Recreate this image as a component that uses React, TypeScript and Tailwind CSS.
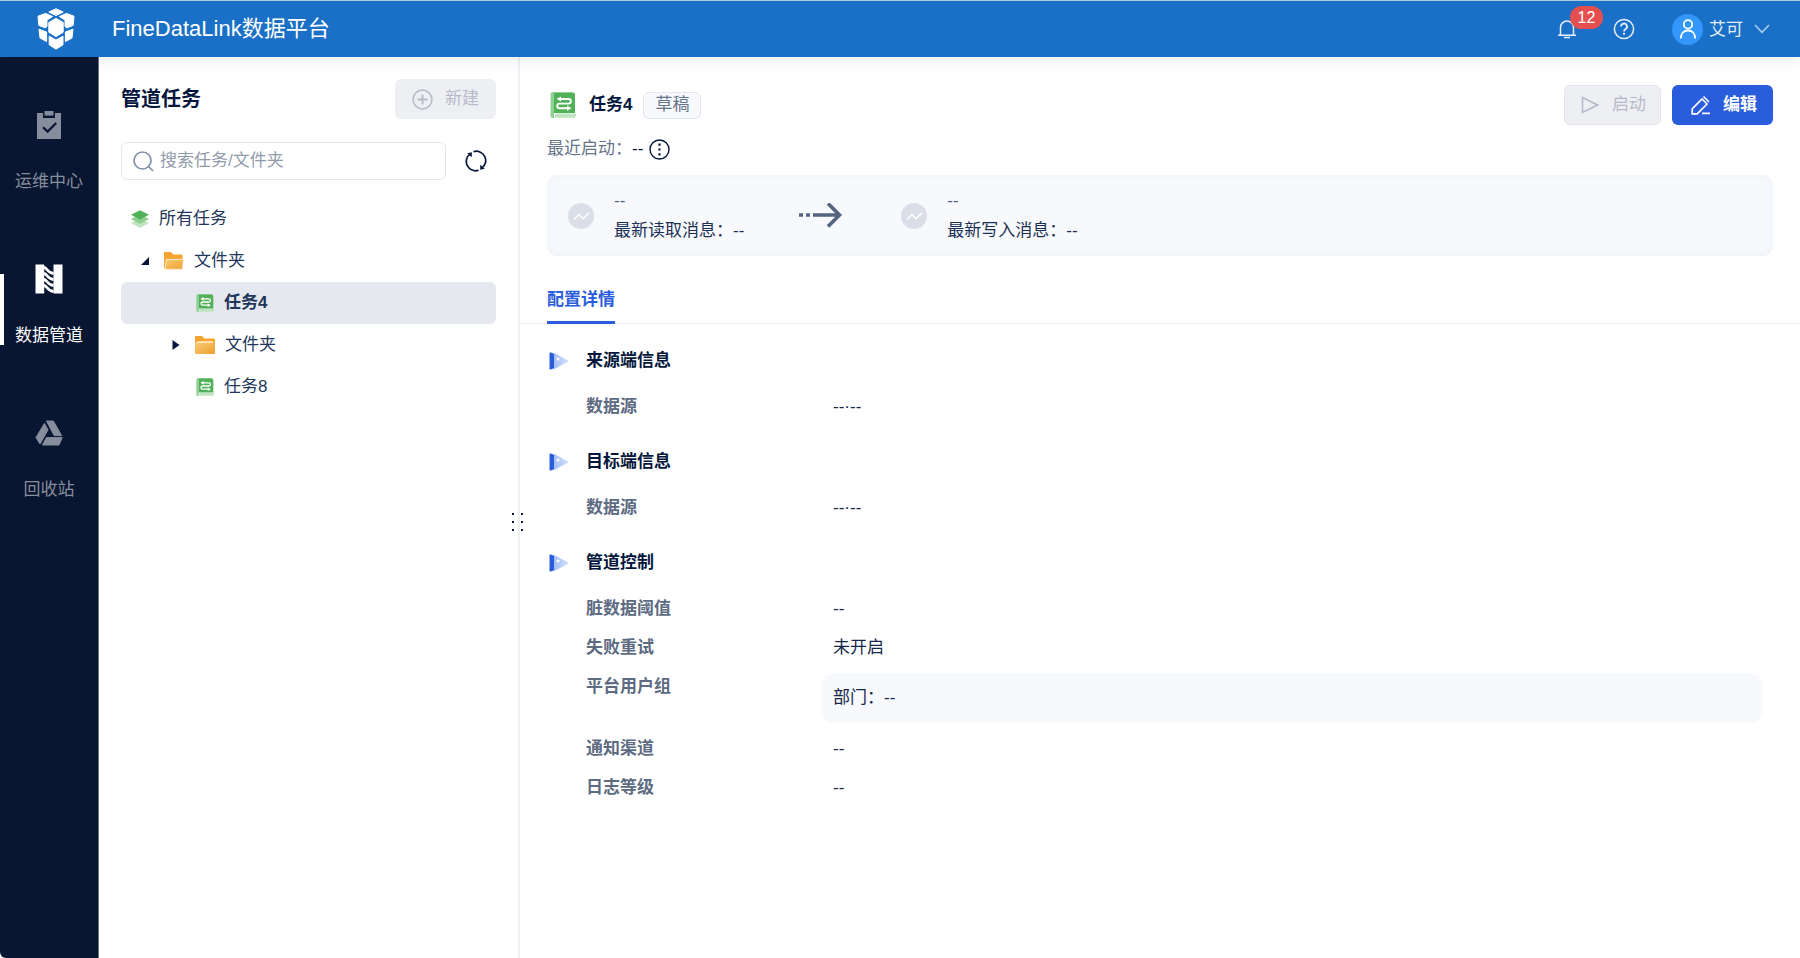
import { useState } from "react";
import type { ReactNode } from "react";
import clsx from "clsx";

interface InfoRow {
  label: string;
  value: string;
  boxed?: boolean;
}

interface InfoSection {
  title: string;
  rows: InfoRow[];
}

const sections: InfoSection[] = [
  { title: "来源端信息", rows: [{ label: "数据源", value: "--·--" }] },
  { title: "目标端信息", rows: [{ label: "数据源", value: "--·--" }] },
  {
    title: "管道控制",
    rows: [
      { label: "脏数据阈值", value: "--" },
      { label: "失败重试", value: "未开启" },
      { label: "平台用户组", value: "部门：--", boxed: true },
      { label: "通知渠道", value: "--" },
      { label: "日志等级", value: "--" },
    ],
  },
];

/* ---------- Icons ---------- */

function LogoIcon() {
  return (
    <svg width="38" height="42" viewBox="0 0 38 42" fill="#fff" stroke="#fff" strokeWidth="1" strokeLinejoin="round">
      <path d="M19 .8 26.2 4 19 7.6 11.8 4Z" />
      <path d="M1 8.2 8.6 5.4 15.6 8.6 10 12v6.600L8 19.800 1.800 17.400Z" />
      <path d="M37 8.2 29.4 5.4 22.4 8.6 28 12v6.600l2 1.200 6.200-2.400Z" />
      <path d="M19 10.4 26.2 14.4v9.8L19 28.6l-7.2-4.4v-9.8Z" />
      <path d="M2 21.2 9.6 24v9.6L3 30Z" />
      <path d="M36 21.2 28.4 24v9.6L35 30Z" />
      <path d="M12.2 28.2 19 32l7-3.8v8.6L19 41.2l-6.8-4.4Z" />
    </svg>
  );
}

function BellIcon() {
  return (
    <svg width="20" height="20" viewBox="0 0 20 20" fill="none" stroke="#e4eefa" strokeWidth="1.5">
      <path d="M3.5 16V8.5a6.5 6.5 0 0 1 13 0V16M1 16.2h18M7 18.6h6" />
    </svg>
  );
}

function HelpIcon() {
  return (
    <svg width="22" height="22" viewBox="0 0 22 22" fill="none" stroke="#e4eefa" strokeWidth="1.5">
      <circle cx="11" cy="11" r="9.6" />
      <path d="M8 8.6a3 3 0 1 1 4.4 2.6c-1 .6-1.4 1-1.4 2.2" strokeWidth="1.8" />
      <path d="M11 14.8v2" strokeWidth="1.9" />
    </svg>
  );
}

function UserIcon() {
  return (
    <svg width="18" height="20" viewBox="0 0 18 20" fill="none" stroke="#fff" strokeWidth="1.8">
      <circle cx="9" cy="5.4" r="4.2" />
      <path d="M1.8 19.5c0-5 3-8 7.2-8s7.2 3 7.2 8" />
    </svg>
  );
}

function ClipboardIcon() {
  return (
    <svg width="26" height="28" viewBox="0 0 26 28">
      <path fill="currentColor" d="M1 2h6v5h12V2h6v26H1Z" />
      <path fill="currentColor" d="M8.5 0h9v4.6h-9Z" />
      <path d="m7 16.2 4.6 4.4 8.6-8.6" fill="none" stroke="#091631" strokeWidth="2.2" />
    </svg>
  );
}

function PipelineIcon() {
  return (
    <svg width="28" height="30" viewBox="0 0 28 30">
      <path fill="currentColor" d="M.5.5h8.7v29H.5ZM18.5.5h9v29h-9Z" />
      <path
        d="M9 3.500c3.500.2 3 5.600 9.600 6M9 9.500c3.500.2 3 5.600 9.600 6M9 15.500c3.500.2 3 5.600 9.600 6M9 21.500c3.500.2 3 5.600 9.600 6"
        fill="none"
        stroke="currentColor"
        strokeWidth="2.8"
      />
    </svg>
  );
}

function RecycleIcon() {
  return (
    <svg width="28" height="26" viewBox="0 0 28 26" fill="currentColor" stroke="currentColor" strokeWidth="1" strokeLinejoin="round">
      <path d="M11.4 1h7l8.2 14.6h-7.4Z" />
      <path d="M9.4 3.4 13 9.8 5 24 1 17.6Z" />
      <path d="M11.4 17.6h15.8L24 25H7.4Z" />
    </svg>
  );
}

function LayersIcon() {
  return (
    <svg width="18" height="18" viewBox="0 0 18 18">
      <path fill="#bfe5c0" d="m0 13 9-4.4 9 4.4-9 5Z" />
      <path fill="#8fcf92" d="m0 9 9-4.4L18 9l-9 5Z" />
      <path fill="#52b058" d="m0 4.8 9-4.6 9 4.6-9 4.8Z" />
    </svg>
  );
}

function FolderIcon({ open }: { open?: boolean }) {
  return (
    <svg width="20" height="18" viewBox="0 0 20 18" className="shrink-0">
      <defs>
        <linearGradient id="folder" x1="0" y1="0" x2="1" y2="1">
          <stop offset="0" stopColor="#fccb74" />
          <stop offset="1" stopColor="#eda030" />
        </linearGradient>
      </defs>
      {open ? (
        <>
          <path fill="#f4a42f" d="M0 1.2C0 .5.5 0 1.2 0h5.6l2.6 2.6h8c.7 0 1.2.5 1.2 1.2V16H0Z" />
          <path fill="url(#folder)" stroke="#fff3dc" strokeWidth=".9" d="M2.4 7.4h17.2l-1.4 10H.8Z" />
        </>
      ) : (
        <>
          <path fill="#f4a42f" d="M0 1.2C0 .5.5 0 1.2 0h5.6l2.6 2.6h9.2c.8 0 1.4.6 1.4 1.4V17H0Z" />
          <rect y="6" width="20" height="12" rx="1" fill="url(#folder)" />
          <path fill="#fff8ea" d="M2 5.4h16v1.3H2Z" />
        </>
      )}
    </svg>
  );
}

function TaskIcon({ large }: { large?: boolean }) {
  return (
    <svg viewBox="0 0 26 26" className={clsx("shrink-0", large ? "size-[26px]" : "size-[18px]")}>
      <path fill="#8fd093" d="M3 0h19a3 3 0 0 1 3 3H4v23H2.5A2 2 0 0 1 .5 24V2.5A2.5 2.5 0 0 1 3 0Z" />
      <path fill="#52b058" d="M4 1h18.500A2.500 2.500 0 0 1 25 3.500V21H4Z" />
      <path fill="#bfe5c0" d="M5.500 21.500H26v2.300a2 2 0 0 1-2 2H4.500Z" />
      <path
        d="M9 7h9.500a2.300 2.300 0 0 1 0 4.600H9.500a2.300 2.300 0 0 0 0 4.600H19"
        fill="none"
        stroke="#fff"
        strokeWidth="1.900"
        strokeLinecap="round"
      />
      <path fill="#fff" d="M11 4.400v5.200L6.500 7ZM17 13.600v5.200l4.500-2.600Z" />
    </svg>
  );
}

function RefreshIcon() {
  return (
    <svg width="22" height="22" viewBox="0 0 22 22" fill="none" stroke="#04163c" strokeWidth="1.7">
      <path d="M8.5 1.7a9.300 9.300 0 0 1 8.300 16.400M13.500 20.300A9.300 9.300 0 0 1 5.200 3.900" />
      <path fill="#04163c" stroke="none" d="M2.200 3.200 6.800 2.200v5ZM19.800 18.800l-4.600 1v-5Z" />
    </svg>
  );
}

function StatusIcon() {
  return (
    <svg width="26" height="26" viewBox="0 0 26 26" className="shrink-0">
      <circle cx="13" cy="13" r="13" fill="#dadee6" />
      <path d="m6 16.5 5-5 4.200 4.200 5.800-6" fill="none" stroke="#fff" strokeWidth="1.5" />
    </svg>
  );
}

function SectionMarker() {
  return (
    <svg width="20" height="18" viewBox="0 0 20 18" className="shrink-0">
      <defs>
        <linearGradient id="marker" x1="0" y1="0" x2="1" y2="0">
          <stop offset="0" stopColor="#a6bff5" />
          <stop offset="1" stopColor="#d0dffc" />
        </linearGradient>
      </defs>
      <path fill="url(#marker)" d="M5 .8 19 8.400a.8.8 0 0 1 0 1.300L5 17.200Z" />
      <path fill="#2a5ddb" d="M.5 1.500C.5.500 1.200.3 2 .6l3 1.200v14.400l-3 1.200c-.8.300-1.500.1-1.500-.9Z" />
      <circle cx="9" cy="7" r="1.500" fill="#fff" />
    </svg>
  );
}

/* ---------- Layout parts ---------- */

function Header() {
  return (
    <header className="relative z-10 flex h-[57px] shrink-0 items-center border-t border-[#a9cbe0] bg-[#1a70c6] pr-[30px] pl-[37px] text-white shadow-[0_4px_16px_rgba(20,40,90,0.08)]">
      <LogoIcon />
      <h1 className="ml-[37px] pb-[2px] text-[22px]">FineDataLink数据平台</h1>

      <div className="ml-auto flex items-center">
        <button type="button" className="relative" aria-label="消息">
          <BellIcon />
          <span className="absolute -top-[13px] left-[13px] flex h-[23px] w-[33px] items-center justify-center rounded-full bg-[#e54f4f] text-base">
            12
          </span>
        </button>
        <button type="button" className="ml-[36px]" aria-label="帮助">
          <HelpIcon />
        </button>
        <button type="button" className="ml-[37px] flex items-center text-[17px] text-[#e4eefa]">
          <span className="flex size-[31px] items-center justify-center rounded-full bg-[#3296fa]">
            <UserIcon />
          </span>
          <span className="ml-[6px] pt-[2px]">艾可</span>
          <svg width="16" height="10" viewBox="0 0 16 10" fill="none" stroke="#a9cdf0" strokeWidth="1.6" className="ml-[11px]">
            <path d="m1 1 7 7.4L15 1" />
          </svg>
        </button>
      </div>
    </header>
  );
}

function NavItem({ icon, label, active }: { icon: ReactNode; label: string; active?: boolean }) {
  return (
    <a
      href="#"
      className={clsx(
        "relative flex h-[154px] flex-col items-center pt-[39px] text-[17px]",
        active ? "text-white" : "text-[#868d9c]"
      )}
    >
      {active && <span className="absolute top-[49px] left-0 h-[71px] w-1 bg-white" />}
      <span className="flex h-[30px] items-center">{icon}</span>
      <span className="mt-[30px] leading-6">{label}</span>
    </a>
  );
}

function Sidebar() {
  return (
    <nav className="w-[99px] shrink-0 rounded-bl-[6px] border-r border-[#6c7486] bg-[#091631] pt-[14px]">
      <NavItem icon={<ClipboardIcon />} label="运维中心" />
      <NavItem icon={<PipelineIcon />} label="数据管道" active />
      <NavItem icon={<RecycleIcon />} label="回收站" />
    </nav>
  );
}

function TreeRow({
  icon,
  label,
  indent,
  arrow,
  selected,
}: {
  icon: ReactNode;
  label: string;
  indent: string;
  arrow?: "open" | "closed";
  selected?: boolean;
}) {
  return (
    <li>
      <button
        type="button"
        className={clsx(
          "flex h-[42px] w-full items-center rounded-md text-[17px] text-[#22365a]",
          indent,
          selected && "bg-[#e6e8f0] font-bold"
        )}
      >
        {arrow && (
          <svg width="8" height="10" viewBox="0 0 8 10" fill="#04163c" className="mr-[15px]">
            {arrow === "open" ? <path d="M8 1v8H0Z" /> : <path d="M.5 0 7.5 5l-7 5Z" />}
          </svg>
        )}
        {icon}
        <span className="ml-[10px]">{label}</span>
      </button>
    </li>
  );
}

function TaskPanel() {
  const [keyword, setKeyword] = useState("");

  return (
    <aside className="relative w-[421px] shrink-0 border-r-2 border-[#f0f1f5] pt-[22px] pr-[22px] pl-[22px]">
      <div className="flex items-center justify-between">
        <h2 className="text-[20px] font-bold text-[#04163c]">管道任务</h2>
        <button
          type="button"
          disabled
          className="flex h-10 items-center gap-3 rounded-md bg-[#eeeff3] px-[17px] text-[17px] text-[#b5bbc8]"
        >
          <svg width="21" height="21" viewBox="0 0 21 21" fill="none" stroke="currentColor" strokeWidth="1.5">
            <circle cx="10.5" cy="10.5" r="9.4" />
            <path d="M10.5 5.5v10M5.5 10.5h10" strokeWidth="1.8" />
          </svg>
          新建
        </button>
      </div>

      <div className="mt-[23px] flex items-center">
        <label className="flex h-[38px] min-w-0 flex-1 items-center gap-[6px] rounded-md border border-[#e4e6ee] pl-[11px]">
          <svg width="21" height="21" viewBox="0 0 21 21" fill="none" stroke="#8090a8" strokeWidth="1.7">
            <circle cx="9.5" cy="9.5" r="8.5" />
            <path d="m15.5 15.5 4.5 4.5" />
          </svg>
          <input
            type="text"
            aria-label="搜索任务/文件夹"
            placeholder="搜索任务/文件夹"
            value={keyword}
            onChange={(e) => setKeyword(e.target.value)}
            className="min-w-0 flex-1 text-[17px] outline-none placeholder:text-[#929baa]"
          />
        </label>
        <button type="button" className="mr-[9px] ml-[19px]" aria-label="刷新">
          <RefreshIcon />
        </button>
      </div>

      <ul className="mt-[18px]">
        <TreeRow icon={<LayersIcon />} label="所有任务" indent="pl-[10px]" />
        <TreeRow icon={<FolderIcon open />} label="文件夹" indent="pl-5" arrow="open" />
        <TreeRow icon={<TaskIcon />} label="任务4" indent="pl-[75px]" selected />
        <TreeRow icon={<FolderIcon />} label="文件夹" indent="pl-[51px]" arrow="closed" />
        <TreeRow icon={<TaskIcon />} label="任务8" indent="pl-[75px]" />
      </ul>

      {/* Resize handle */}
      <svg
        width="12"
        height="18"
        viewBox="0 0 12 18"
        fill="#04163c"
        className="absolute top-[456px] -right-[6px] cursor-col-resize"
      >
        <path d="M0 0h2v2H0ZM9 0h2v2H9ZM0 8h2v2H0ZM9 8h2v2H9ZM0 16h2v2H0ZM9 16h2v2H9Z" />
      </svg>
    </aside>
  );
}

function MessageStat({ label }: { label: string }) {
  return (
    <div className="flex items-center gap-5">
      <StatusIcon />
      <div className="pt-[3px] text-[17px]">
        <p className="leading-7 text-[#56657f]">--</p>
        <p className="leading-8 text-[#1b2f54]">{label}：--</p>
      </div>
    </div>
  );
}

function Section({ section }: { section: InfoSection }) {
  return (
    <section className="mb-6">
      <h3 className="flex h-6 items-center gap-[17px] pl-[2px] text-[17px] font-bold text-[#04163c]">
        <SectionMarker />
        {section.title}
      </h3>
      <dl className="mt-[14px] pl-[39px] text-[17px]">
        {section.rows.map((row) => (
          <div key={row.label} className="flex">
            <dt className="w-[247px] shrink-0 leading-[39px] font-bold text-[#5d6b82]">{row.label}</dt>
            {row.boxed ? (
              <dd className="my-[6px] mr-[11px] -ml-[11px] flex-1 rounded-[10px] bg-[#f7f9fd] px-[11px] leading-[50px] text-[#14274c]">
                {row.value}
              </dd>
            ) : (
              <dd className="leading-[39px] text-[#14274c]">{row.value}</dd>
            )}
          </div>
        ))}
      </dl>
    </section>
  );
}

function TaskDetail() {
  return (
    <main className="min-w-0 flex-1 pt-7">
      <div className="px-[27px]">
        <div className="flex h-10 items-center">
          <span className="ml-[3px]">
            <TaskIcon large />
          </span>
          <h2 className="ml-[13px] text-[17px] font-bold text-[#04163c]">任务4</h2>
          <span className="ml-[11px] flex h-[27px] items-center rounded-md border border-[#e4e6ee] bg-[#f7f9fd] px-[11px] text-[17px] text-[#67758c]">
            草稿
          </span>
          <button
            type="button"
            disabled
            className="ml-auto flex h-10 items-center gap-[13px] rounded-md border border-[#e2e4ea] bg-[#eeeff3] pr-[14px] pl-4 text-[17px] text-[#b5bbc8]"
          >
            <svg width="18" height="18" viewBox="0 0 18 18" fill="none" stroke="currentColor" strokeWidth="1.6">
              <path d="M1.5 1.5v15L16.5 9Z" />
            </svg>
            启动
          </button>
          <button
            type="button"
            className="ml-[11px] flex h-10 items-center gap-3 rounded-md bg-[#2a5ddb] pr-4 pl-[19px] text-[17px] font-bold text-white"
          >
            <svg width="20" height="20" viewBox="0 0 20 20" fill="none" stroke="currentColor" strokeWidth="1.7">
              <path d="M1.2 18.8v-5L11 4l5 5-9.8 9.8ZM12.5 1.5l5.5 5.5M11 18.4h8" />
            </svg>
            编辑
          </button>
        </div>

        <div className="mt-3 flex h-6 items-center text-[17px] text-[#67758c]">
          最近启动：<span className="text-[#04163c]">--</span>
          <button type="button" className="ml-[6px]" aria-label="更多">
            <svg width="21" height="21" viewBox="0 0 21 21" fill="none" stroke="#04163c" strokeWidth="1.4">
              <circle cx="10.5" cy="10.5" r="9.5" />
              <path fill="#04163c" stroke="none" d="M9.4 4.6h2.200v2.200H9.400ZM9.400 9.400h2.200v2.200H9.400ZM9.400 14.200h2.200v2.200H9.400Z" />
            </svg>
          </button>
        </div>

        <div className="mt-[14px] flex h-[81px] items-center rounded-[10px] bg-[#f7f9fd] px-[21px] shadow-[inset_0_0_8px_rgba(30,60,110,0.05)]">
          <MessageStat label="最新读取消息" />
          <svg width="44" height="26" viewBox="0 0 44 26" fill="none" stroke="#56657f" strokeWidth="3.6" className="mr-[58px] ml-[55px]">
            <path d="M0 12h4M7 12h4M14 12h27M29 .5 40.500 12 29 23.500" />
          </svg>
          <MessageStat label="最新写入消息" />
        </div>
      </div>

      <div className="mt-[25px] flex border-b border-[#eaebef] px-[27px]">
        <button type="button" className="-mb-px h-[43px] border-b-[3px] border-[#2a5ddb] pb-[3px] text-[17px] font-bold text-[#2a5ddb]">
          配置详情
        </button>
      </div>

      <div className="px-[27px] pt-[25px]">
        {sections.map((section) => (
          <Section key={section.title} section={section} />
        ))}
      </div>
    </main>
  );
}

export default function App() {
  return (
    <div className="flex min-h-screen flex-col bg-white font-['Liberation_Sans','Noto_Sans_CJK_SC',sans-serif]">
      <Header />
      <div className="flex flex-1">
        <Sidebar />
        <TaskPanel />
        <TaskDetail />
      </div>
    </div>
  );
}
